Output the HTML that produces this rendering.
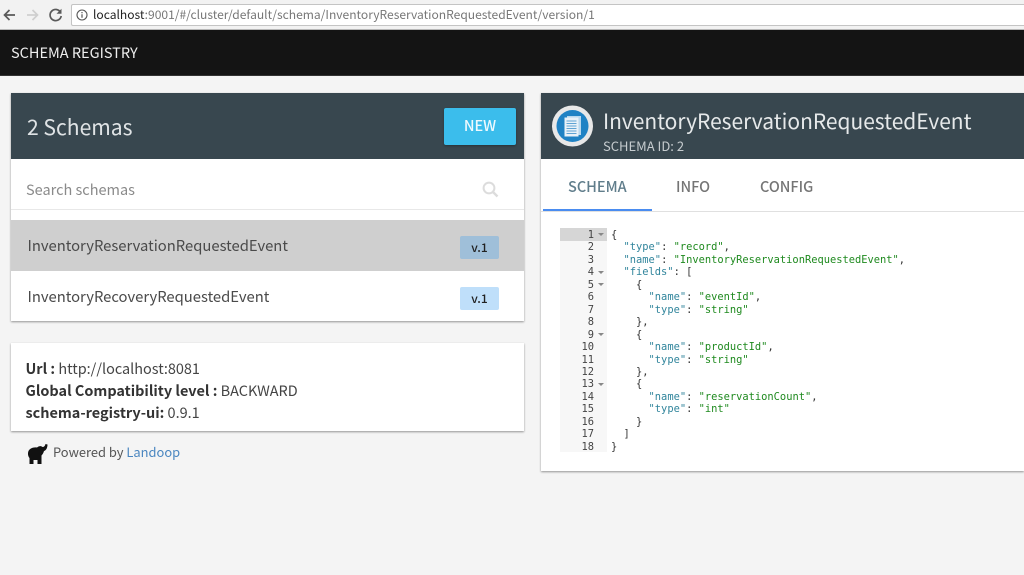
<!DOCTYPE html>
<html><head><meta charset="utf-8"><style>
*{box-sizing:border-box}
html,body{margin:0;padding:0;width:1024px;height:575px;overflow:hidden;background:#f4f4f4}
body{position:relative;font-family:"Noto Sans CJK SC","Liberation Sans",sans-serif;color:#444;filter:blur(.3px)}
.a{position:absolute;white-space:nowrap}
.t{position:absolute;white-space:nowrap;line-height:20px}
.code{position:absolute;left:611px;font:10.4px/12.45px "DejaVu Sans Mono",monospace;white-space:pre;color:#333}
.ln{position:absolute;left:560px;width:34px;text-align:right;font:10.4px/12.45px "DejaVu Sans Mono",monospace;color:#444;white-space:pre}
.k{color:#31859c}.s{color:#1f8a1f}
.fold{position:absolute;left:598px;width:0;height:0;border-left:3px solid transparent;border-right:3px solid transparent;border-top:3px solid #888}
</style></head><body>
<div class="a" style="left:0;top:0;width:1024px;height:30px;background:#f2f2f2;border-bottom:1px solid #b8b8b8"></div>
<svg class="a" style="left:0;top:4px" width="70" height="22" viewBox="0 0 70 22">
<path d="M15 11H4.5M9.5 6l-5 5 5 5" fill="none" stroke="#5a5a5a" stroke-width="1.7"/>
<path d="M27 11h10.5M32.5 6l5 5-5 5" fill="none" stroke="#cfcfcf" stroke-width="1.7"/>
<path d="M60.5 8.2A5.6 5.6 0 1 0 61.2 12" fill="none" stroke="#5a5a5a" stroke-width="1.7"/><path d="M61.5 4.8v5h-5z" fill="#5a5a5a"/>
</svg>
<div class="a" style="left:71px;top:4px;width:953px;height:22px;background:#fff;border:1px solid #c4c4c4;border-right:0;border-radius:2px 0 0 2px"></div>
<svg class="a" style="left:76px;top:9px" width="12" height="12" viewBox="0 0 12 12"><circle cx="6" cy="6" r="5" fill="none" stroke="#555" stroke-width="1.1"/><path d="M6 5.2v3.6M6 3v1.3" stroke="#555" stroke-width="1.2"/></svg>
<div class="t" style="left:93px;top:5px;font-size:12.06px;color:#777"><span style="color:#222">localhost</span>:9001/#/cluster/default/schema/InventoryReservationRequestedEvent/version/1</div>

<div class="a" style="left:0;top:30px;width:1024px;height:46px;background:#141414;border-bottom:1px solid #333"></div>
<div class="t" style="left:11px;top:43px;font-size:14.5px;color:#eee">SCHEMA REGISTRY</div>

<div class="a" style="left:11px;top:93px;width:513px;height:228px;background:#fff;box-shadow:0 1px 2px rgba(0,0,0,.4)"></div>
<div class="a" style="left:11px;top:93px;width:513px;height:66px;background:#38474f"></div>
<div class="t" style="left:27px;top:115px;font-size:21.1px;line-height:24px;color:#dfe3e5">2 Schemas</div>
<div class="a" style="left:444px;top:108px;width:72px;height:37px;background:#3bbdec;border-radius:2px;box-shadow:0 1px 2px rgba(0,0,0,.3)"></div>
<div class="t" style="left:444px;top:116px;width:72px;text-align:center;font-size:14.5px;font-weight:500;color:#eef9fe">NEW</div>
<div class="t" style="left:26px;top:179.5px;font-size:14.5px;color:#8a8a8a">Search schemas</div>
<svg class="a" style="left:481px;top:180px" width="18" height="18" viewBox="0 0 18 18"><circle cx="8" cy="8" r="5.4" fill="none" stroke="#dcdcdc" stroke-width="2"/><path d="M12 12l4.500 4.500" stroke="#dcdcdc" stroke-width="2.4"/></svg>
<div class="a" style="left:11px;top:209px;width:513px;height:1px;background:#e8e8e8"></div>
<div class="a" style="left:11px;top:220px;width:513px;height:51px;background:#cfcfcf"></div>
<div class="t" style="left:27.5px;top:236px;font-size:14.8px;color:#4a4a4a">InventoryReservationRequestedEvent</div>
<div class="a" style="left:460px;top:236px;width:39px;height:23px;background:#9fbfd9;border-radius:2px"></div>
<div class="t" style="left:460px;top:238px;width:39px;text-align:center;font-size:12px;font-weight:500;color:#222">v.1</div>
<div class="t" style="left:27.5px;top:287px;font-size:14.8px;color:#4a4a4a">InventoryRecoveryRequestedEvent</div>
<div class="a" style="left:460px;top:287px;width:39px;height:23px;background:#bfdffa;border-radius:2px"></div>
<div class="t" style="left:460px;top:289px;width:39px;text-align:center;font-size:12px;font-weight:500;color:#222">v.1</div>

<div class="a" style="left:11px;top:343px;width:513px;height:88px;background:#fff;box-shadow:0 1px 2px rgba(0,0,0,.4)"></div>
<div class="t" style="left:25.5px;top:359px;font-size:14.45px;color:#444"><b style="font-weight:700;color:#333">Url :</b> http://localhost:8081</div>
<div class="t" style="left:25.5px;top:381px;font-size:14.45px;color:#444"><b style="font-weight:700;color:#333">Global Compatibility level :</b> BACKWARD</div>
<div class="t" style="left:25.5px;top:403px;font-size:14.45px;color:#444"><b style="font-weight:700;color:#333">schema-registry-ui:</b> 0.9.1</div>
<svg class="a" style="left:27px;top:443px" width="21" height="22" viewBox="0 0 21 22"><path d="M1 10C1.500 6 5 4 10 4.500 11.500 3 14 2.500 15.500 4 17 4 18 3 18.500 1L20.500 1.500C20.500 5 19 7.500 17 8 16.500 10 15.500 11.500 14.500 12.500L14.500 21H10.500V17H6.500V21H2.500V15C1.500 14 .8 12 1 10Z" fill="#111"/></svg>
<div class="t" style="left:53px;top:442px;font-size:12.9px;color:#555">Powered by <span style="color:#4a86c0">Landoop</span></div>

<div class="a" style="left:541px;top:93px;width:483px;height:378px;background:#fff;box-shadow:0 1px 2px rgba(0,0,0,.4)"></div>
<div class="a" style="left:541px;top:93px;width:483px;height:66px;background:#38474f"></div>
<svg class="a" style="left:551px;top:105px" width="43" height="42" viewBox="0 0 43 42"><circle cx="21.500" cy="21" r="20.500" fill="#e8e8e8"/><circle cx="21.500" cy="21" r="16" fill="#1f82c4"/><rect x="16" y="11" width="14" height="19" fill="#b9d8ee"/><rect x="13.500" y="12.500" width="14" height="19" fill="#e8f1f8"/><path d="M15.500 16h10M15.500 18.500h10M15.500 21h10M15.500 23.500h10M15.500 26h10M15.500 28.500h10" stroke="#5fa3d3" stroke-width="1"/></svg>
<div class="t" style="left:603px;top:108px;font-size:20.95px;line-height:26px;color:#e6e9ea">InventoryReservationRequestedEvent</div>
<div class="t" style="left:603px;top:136px;font-size:13px;color:#c6cccf">SCHEMA ID: 2</div>
<div class="a" style="left:541px;top:211px;width:483px;height:1px;background:#e0e0e0"></div>
<div class="a" style="left:543px;top:209px;width:109px;height:2px;background:#4a8cf0"></div>
<div class="t" style="left:568px;top:177px;font-size:14.5px;font-weight:500;color:#607d8b">SCHEMA</div>
<div class="t" style="left:676px;top:177px;font-size:14.5px;font-weight:500;color:#757575">INFO</div>
<div class="t" style="left:760px;top:177px;font-size:14.5px;font-weight:500;color:#757575">CONFIG</div>

<div class="a" style="left:560px;top:228px;width:47px;height:224px;background:#f7f7f7"></div>
<div class="a" style="left:560px;top:228px;width:47px;height:13px;background:#d6d6d6"></div>
<div class="ln" style="top:229px">1
2
3
4
5
6
7
8
9
10
11
12
13
14
15
16
17
18</div>
<i class="fold" style="top:233px"></i><i class="fold" style="top:271px"></i><i class="fold" style="top:283px"></i><i class="fold" style="top:333px"></i><i class="fold" style="top:383px"></i>
<div class="code" style="top:229px">{
  <span class="k">"type"</span>: <span class="s">"record"</span>,
  <span class="k">"name"</span>: <span class="s">"InventoryReservationRequestedEvent"</span>,
  <span class="k">"fields"</span>: [
    {
      <span class="k">"name"</span>: <span class="s">"eventId"</span>,
      <span class="k">"type"</span>: <span class="s">"string"</span>
    },
    {
      <span class="k">"name"</span>: <span class="s">"productId"</span>,
      <span class="k">"type"</span>: <span class="s">"string"</span>
    },
    {
      <span class="k">"name"</span>: <span class="s">"reservationCount"</span>,
      <span class="k">"type"</span>: <span class="s">"int"</span>
    }
  ]
}</div>
</body></html>
